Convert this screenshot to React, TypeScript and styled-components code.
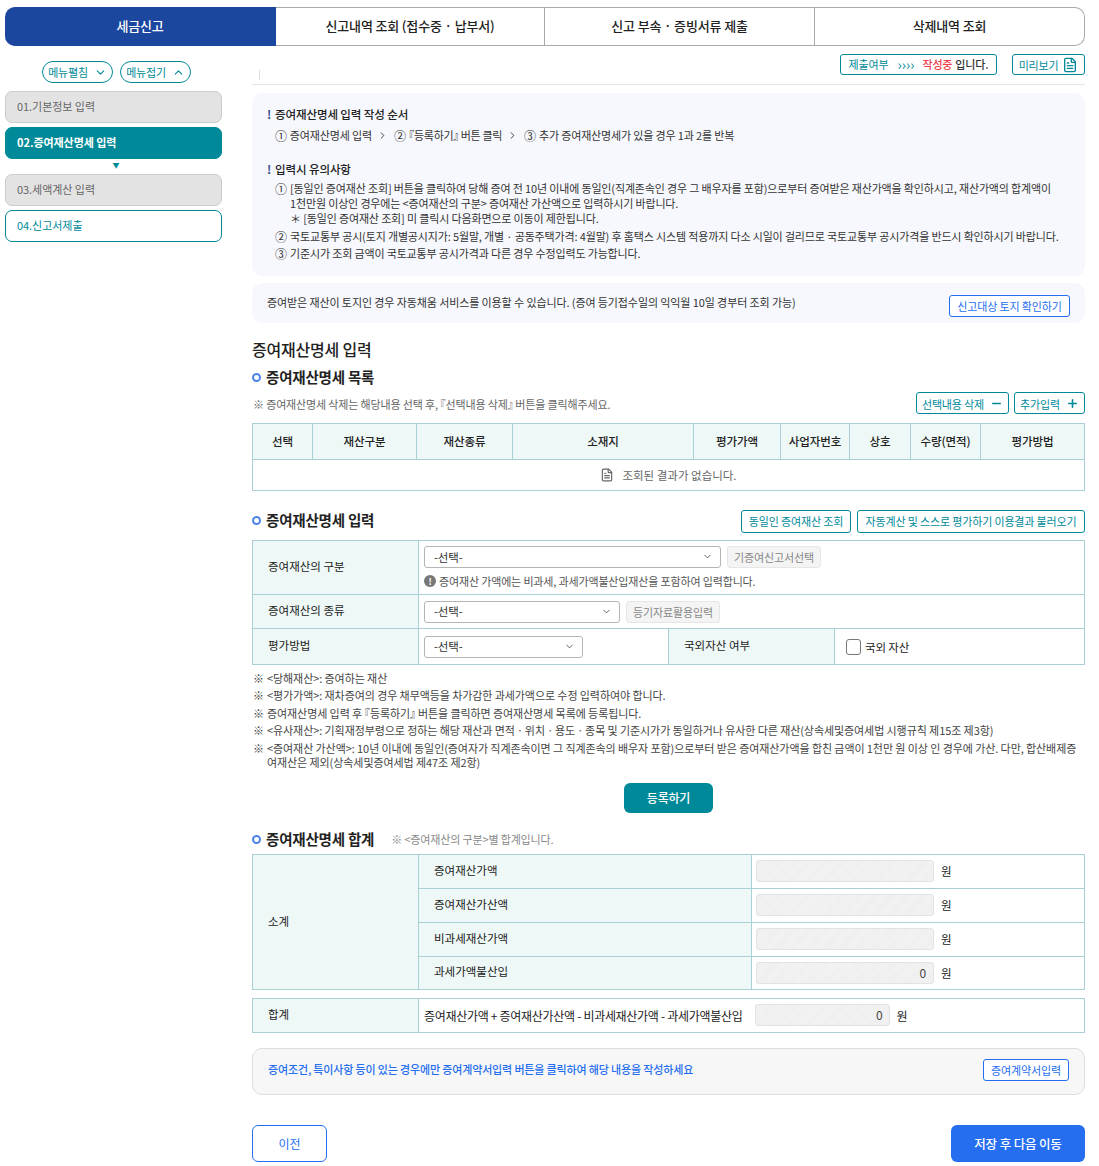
import React from 'react';
import styled, { createGlobalStyle } from 'styled-components';
import { ChevronDown, ChevronRight, ChevronUp, FileText, Minus, Plus } from 'lucide-react';

const TEAL = '#008a99';
const BLUE = '#256ef0';
const LINE = '#a9d0d6';
const HEAD = '#eef8f6';

const listColumns = [
  { label: '선택', width: 60 },
  { label: '재산구분', width: 104 },
  { label: '재산종류', width: 96 },
  { label: '소재지', width: 181 },
  { label: '평가가액', width: 87 },
  { label: '사업자번호', width: 69 },
  { label: '상호', width: 61 },
  { label: '수량(면적)', width: 70 },
  { label: '평가방법', width: 104 },
];

const subtotals = [
  { label: '증여재산가액', value: '' },
  { label: '증여재산가산액', value: '' },
  { label: '비과세재산가액', value: '' },
  { label: '과세가액불산입', value: '0' },
];

const App = () => {
  const notes: React.ReactNode[] = [
    '<당해재산>: 증여하는 재산',
    '<평가가액>: 재차증여의 경우 채무액등을 차가감한 과세가액으로 수정 입력하여야 합니다.',
    <>
      증여재산명세 입력 후 <Bracket>『</Bracket>등록하기<Bracket>』</Bracket> 버튼을 클릭하면 증여재산명세 목록에 등록됩니다.
    </>,
    '<유사재산>: 기획재정부령으로 정하는 해당 재산과 면적ㆍ위치ㆍ용도ㆍ종목 및 기준시가가 동일하거나 유사한 다른 재산(상속세및증여세법 시행규칙 제15조 제3항)',
    '<증여재산 가산액>: 10년 이내에 동일인(증여자가 직계존속이면 그 직계존속의 배우자 포함)으로부터 받은 증여재산가액을 합친 금액이 1천만 원 이상 인 경우에 가산. 다만, 합산배제증여재산은 제외(상속세및증여세법 제47조 제2항)',
  ];

  return (
    <>
      <GlobalStyle />
      <Page>
        <Tabs>
          <Tab $active>세금신고</Tab>
          <Tab>신고내역 조회 (접수중 · 납부서)</Tab>
          <Tab>신고 부속 · 증빙서류 제출</Tab>
          <Tab>삭제내역 조회</Tab>
        </Tabs>

        <Body>
          <Sidebar>
            <MenuToggles>
              <MenuToggle>
                메뉴펼침 <ChevronDown size={13} />
              </MenuToggle>
              <MenuToggle>
                메뉴접기 <ChevronUp size={13} />
              </MenuToggle>
            </MenuToggles>
            <Step $kind="done">01.기본정보 입력</Step>
            <Step $kind="active">02.증여재산명세 입력</Step>
            <StepArrow>▼</StepArrow>
            <Step $kind="done">03.세액계산 입력</Step>
            <Step $kind="next">04.신고서제출</Step>
          </Sidebar>

          <Main>
            <TopBar>
              <TopTick />
              <StatusBox>
                제출여부 <Arrows>››››</Arrows> <Red>작성중</Red> <Strong>입니다.</Strong>
              </StatusBox>
              <PreviewButton>
                미리보기 <FileText size={16} />
              </PreviewButton>
            </TopBar>

            <InfoBox>
              <InfoTitle>증여재산명세 입력 작성 순서</InfoTitle>
              <StepLine>
                <Num>①</Num> 증여재산명세 입력 <ChevronRight size={11} />
                <Num>②</Num>
                <TightText>
                  <Bracket>『</Bracket>등록하기<Bracket>』</Bracket> 버튼 클릭
                </TightText>
                <ChevronRight size={11} />
                <Num>③</Num> 추가 증여재산명세가 있을 경우 1과 2를 반복
              </StepLine>
              <InfoTitle $second>입력시 유의사항</InfoTitle>
              <InfoItem $first>
                <ItemNum>①</ItemNum>
                <div>
                  [동일인 증여재산 조회] 버튼을 클릭하여 당해 증여 전 10년 이내에 동일인(직계존속인 경우 그 배우자를 포함)으로부터 증여받은 재산가액을 확인하시고, 재산가액의 합계액이
                  <br />
                  1천만원 이상인 경우에는 &lt;증여재산의 구분&gt; 증여재산 가산액으로 입력하시기 바랍니다.
                  <br />＊ [동일인 증여재산 조회] 미 클릭시 다음화면으로 이동이 제한됩니다.
                </div>
              </InfoItem>
              <InfoItem>
                <ItemNum>②</ItemNum>
                <div>국토교통부 공시(토지 개별공시지가: 5월말, 개별 · 공동주택가격: 4월말) 후 홈택스 시스템 적용까지 다소 시일이 걸리므로 국토교통부 공시가격을 반드시 확인하시기 바랍니다.</div>
              </InfoItem>
              <InfoItem>
                <ItemNum>③</ItemNum>
                <div>기준시가 조회 금액이 국토교통부 공시가격과 다른 경우 수정입력도 가능합니다.</div>
              </InfoItem>
            </InfoBox>

            <LandBox>
              <span>증여받은 재산이 토지인 경우 자동채움 서비스를 이용할 수 있습니다. (증여 등기접수일의 익익월 10일 경부터 조회 가능)</span>
              <BlueOutlineButton>신고대상 토지 확인하기</BlueOutlineButton>
            </LandBox>

            <PageTitle>증여재산명세 입력</PageTitle>
            <SectionTitle>증여재산명세 목록</SectionTitle>

            <ListTools>
              <GrayNote>
                ※ 증여재산명세 삭제는 해당내용 선택 후, <Bracket>『</Bracket>선택내용 삭제<Bracket>』</Bracket> 버튼을 클릭해주세요.
              </GrayNote>
              <ToolButton $width={93}>
                선택내용 삭제 <Minus size={13} strokeWidth={2.5} />
              </ToolButton>
              <ToolButton $width={71}>
                추가입력 <Plus size={13} strokeWidth={3} />
              </ToolButton>
            </ListTools>

            <ListTable>
              <ListHead>
                {listColumns.map((col) => (
                  <ListHeadCell key={col.label} style={{ width: col.width }}>
                    {col.label}
                  </ListHeadCell>
                ))}
              </ListHead>
              <EmptyRow>
                <FileText size={14} /> 조회된 결과가 없습니다.
              </EmptyRow>
            </ListTable>

            <SectionRow>
              <SectionTitle>증여재산명세 입력</SectionTitle>
              <SectionButtons>
                <ToolButton $width={110} $tall>
                  동일인 증여재산 조회
                </ToolButton>
                <ToolButton $width={228} $tall>
                  자동계산 및 스스로 평가하기 이용결과 불러오기
                </ToolButton>
              </SectionButtons>
            </SectionRow>

            <FormTable>
              <FormRow $height={54}>
                <LabelCell>증여재산의 구분</LabelCell>
                <ValueCell $column>
                  <InlineRow>
                    <SelectBox $width={297}>
                      -선택- <ChevronDown size={11} />
                    </SelectBox>
                    <DisabledButton>기증여신고서선택</DisabledButton>
                  </InlineRow>
                  <Warning>
                    <WarnDot>!</WarnDot> 증여재산 가액에는 비과세, 과세가액불산입재산을 포함하여 입력합니다.
                  </Warning>
                </ValueCell>
              </FormRow>
              <FormRow $height={34}>
                <LabelCell>증여재산의 종류</LabelCell>
                <ValueCell>
                  <InlineRow>
                    <SelectBox $width={196}>
                      -선택- <ChevronDown size={11} />
                    </SelectBox>
                    <DisabledButton>등기자료활용입력</DisabledButton>
                  </InlineRow>
                </ValueCell>
              </FormRow>
              <FormRow $height={36} $split>
                <LabelCell>평가방법</LabelCell>
                <ValueCell>
                  <SelectBox $width={159}>
                    -선택- <ChevronDown size={11} />
                  </SelectBox>
                </ValueCell>
                <LabelCell>국외자산 여부</LabelCell>
                <ValueCell $checkbox>
                  <CheckBox />
                  국외 자산
                </ValueCell>
              </FormRow>
            </FormTable>

            <NoteList>
              {notes.map((note, index) => (
                <NoteItem key={index}>
                  <span>※</span>
                  <span>{note}</span>
                </NoteItem>
              ))}
            </NoteList>

            <RegisterButton>등록하기</RegisterButton>

            <SummaryHead>
              <SectionTitle>증여재산명세 합계</SectionTitle>
              <GrayNote>※ &lt;증여재산의 구분&gt;별 합계입니다.</GrayNote>
            </SummaryHead>

            <SummaryTable>
              <SummaryLabel>소계</SummaryLabel>
              <SummaryRows>
                {subtotals.map((row) => (
                  <SummaryRow key={row.label}>
                    <SummaryName>{row.label}</SummaryName>
                    <SummaryValue>
                      <AmountInput $width={178}>{row.value}</AmountInput>
                      <span>원</span>
                    </SummaryValue>
                  </SummaryRow>
                ))}
              </SummaryRows>
            </SummaryTable>

            <TotalTable>
              <SummaryLabel>합계</SummaryLabel>
              <TotalValue>
                <span>증여재산가액 + 증여재산가산액 - 비과세재산가액 - 과세가액불산입</span>
                <AmountInput $width={135}>0</AmountInput>
                <span>원</span>
              </TotalValue>
            </TotalTable>

            <ContractBox>
              <ContractText>증여조건, 특이사항 등이 있는 경우에만 증여계약서입력 버튼을 클릭하여 해당 내용을 작성하세요</ContractText>
              <BlueOutlineButton $small>증여계약서입력</BlueOutlineButton>
            </ContractBox>

            <Footer>
              <PrevButton>이전</PrevButton>
              <NextButton>저장 후 다음 이동</NextButton>
            </Footer>
          </Main>
        </Body>
      </Page>
    </>
  );
};

export default App;

const GlobalStyle = createGlobalStyle`
  * {
    margin: 0;
    padding: 0;
    box-sizing: border-box;
  }
  body {
    font-family: 'Noto Sans CJK KR', 'Noto Sans', sans-serif;
    background-color: #fff;
    color: #333;
    font-size: 11px;
    letter-spacing: -0.15px;
  }
`;

const Page = styled.div`
  width: 1099px;
  height: 1166px;
  padding: 7px 14px 0 5px;
  overflow: hidden;
`;

const Tabs = styled.div`
  display: grid;
  grid-template-columns: 271px 269px 270px 270px;
  height: 39px;
`;

const Tab = styled.div<{ $active?: boolean }>`
  display: flex;
  align-items: center;
  justify-content: center;
  padding-bottom: 2px;
  font-size: 13px;
  font-weight: 500;
  color: ${(p) => (p.$active ? '#fff' : '#222')};
  background: ${(p) => (p.$active ? '#1c479f' : '#fff')};
  border: 1px solid ${(p) => (p.$active ? '#1c479f' : '#aaa')};
  border-left: none;
  border-radius: ${(p) => (p.$active ? '10px 0 0 10px' : '0')};

  &:last-child {
    border-radius: 0 10px 10px 0;
  }
`;

const Body = styled.div`
  display: flex;
  gap: 30px;
`;

const Sidebar = styled.aside`
  width: 217px;
  flex-shrink: 0;
  display: flex;
  flex-direction: column;
`;

const MenuToggles = styled.div`
  display: flex;
  justify-content: center;
  gap: 7px;
  margin: 15px 0 8px;
  padding-left: 6px;
`;

const MenuToggle = styled.button`
  display: flex;
  align-items: center;
  justify-content: center;
  gap: 6px;
  width: 71px;
  height: 22px;
  background: #fff;
  border: 1px solid ${TEAL};
  border-radius: 11px;
  color: ${TEAL};
  font: inherit;
  font-size: 11px;
  letter-spacing: -0.2px;
`;

const Step = styled.div<{ $kind: 'done' | 'active' | 'next' }>`
  display: flex;
  align-items: center;
  height: 32px;
  padding: 0 0 2px 11px;
  border-radius: 7px;
  font-size: 11px;
  letter-spacing: -0.05px;
  margin-bottom: ${(p) => (p.$kind === 'done' ? '4px' : '0')};
  background: ${(p) => (p.$kind === 'done' ? '#e3e3e3' : p.$kind === 'active' ? TEAL : '#fff')};
  border: 1px solid ${(p) => (p.$kind === 'done' ? '#ccc' : TEAL)};
  color: ${(p) => (p.$kind === 'done' ? '#666' : p.$kind === 'active' ? '#fff' : TEAL)};
  font-weight: ${(p) => (p.$kind === 'active' ? 700 : 400)};
`;

const StepArrow = styled.div`
  height: 15px;
  padding-left: 5px;
  line-height: 13px;
  text-align: center;
  font-size: 7px;
  color: ${TEAL};
`;

const Main = styled.main`
  width: 833px;
  display: flex;
  flex-direction: column;
`;

const TopBar = styled.div`
  display: flex;
  justify-content: flex-end;
  gap: 15px;
  position: relative;
  height: 39px;
  padding-top: 8px;
  border-bottom: 1px solid #e5e5e5;
`;

const TopTick = styled.span`
  position: absolute;
  left: 7px;
  top: 24px;
  width: 1px;
  height: 10px;
  background: #ddd;
`;

const StatusBox = styled.div`
  display: flex;
  align-items: center;
  justify-content: center;
  gap: 3px;
  width: 157px;
  height: 21px;
  padding-bottom: 1px;
  border: 1px solid ${TEAL};
  border-radius: 3px;
  color: ${TEAL};
  font-size: 11px;
`;

const Arrows = styled.span`
  margin: 0 5px 0 6px;
  font-size: 14px;
  letter-spacing: 0;
`;

const Red = styled.span`
  color: #f0404a;
  font-weight: 500;
`;

const Strong = styled.span`
  color: #333;
  font-weight: 500;
`;

const PreviewButton = styled.button`
  display: flex;
  align-items: center;
  justify-content: center;
  gap: 4px;
  width: 73px;
  height: 21px;
  background: #fff;
  border: 1px solid ${TEAL};
  border-radius: 3px;
  color: ${TEAL};
  font: inherit;
  font-size: 11px;
  letter-spacing: -0.2px;
`;

const InfoBox = styled.section`
  height: 183px;
  margin-top: 8px;
  padding: 13px 15px 0;
  background: #f7f8fd;
  border-radius: 10px;
  color: #333;
  line-height: 15px;
`;

const InfoTitle = styled.h4<{ $second?: boolean }>`
  position: relative;
  margin-top: ${(p) => (p.$second ? '18px' : '0')};
  padding-left: 8px;
  height: 16px;
  font-size: 11.5px;
  font-weight: 500;
  line-height: 16px;
  letter-spacing: -0.1px;
  color: #222;

  &::before {
    content: '!';
    position: absolute;
    left: 0;
    top: 0;
    font-weight: 700;
    color: #33508f;
  }
`;

const StepLine = styled.div`
  display: flex;
  align-items: center;
  height: 15px;
  margin-top: 6px;
  padding-left: 8px;
  gap: 3px;

  svg {
    margin: 0 3px 0 2px;
  }
`;

const Num = styled.span`
  font-size: 12px;
`;

const TightText = styled.span`
  letter-spacing: -0.3px;
`;

// half-width form of the CJK brackets, the reference font draws them narrow
const Bracket = styled.span`
  font-feature-settings: 'halt';
`;

const InfoItem = styled.div<{ $first?: boolean }>`
  display: flex;
  margin-top: ${(p) => (p.$first ? '4px' : '2.5px')};
  padding-left: 8px;
`;

const ItemNum = styled.span`
  width: 15px;
  flex-shrink: 0;
  font-size: 12px;
`;

const LandBox = styled.section`
  display: flex;
  align-items: center;
  justify-content: space-between;
  height: 40px;
  margin-top: 7px;
  padding: 0 15px 2px;
  background: #f7f8fd;
  border-radius: 10px;
  letter-spacing: -0.1px;
`;

const BlueOutlineButton = styled.button<{ $small?: boolean }>`
  width: ${(p) => (p.$small ? '86px' : '121px')};
  height: 22px;
  margin-top: ${(p) => (p.$small ? '0' : '8px')};
  background: #fff;
  border: 1px solid ${BLUE};
  border-radius: 3px;
  color: ${BLUE};
  font: inherit;
  font-size: 11px;
  letter-spacing: -0.15px;
`;

const PageTitle = styled.h2`
  height: 24px;
  margin: 14px 0 6px;
  font-size: 16px;
  font-weight: 500;
  line-height: 24px;
  letter-spacing: -0.2px;
  color: #222;
`;

const SectionTitle = styled.h3`
  position: relative;
  flex-shrink: 0;
  height: 20px;
  padding-left: 14px;
  font-size: 14.5px;
  font-weight: 700;
  line-height: 20px;
  letter-spacing: -0.2px;
  color: #222;

  &::before {
    content: '';
    position: absolute;
    left: 0;
    top: 6px;
    box-sizing: border-box;
    width: 9px;
    height: 9px;
    border: 2px solid #4d82ea;
    border-radius: 50%;
  }
`;

const ListTools = styled.div`
  display: flex;
  align-items: center;
  gap: 5px;
  height: 22px;
  margin: 5px 0 9px;
`;

const GrayNote = styled.span`
  flex: 1;
  padding: 1px 0 0 1px;
  color: #666;
`;

const ToolButton = styled.button<{ $tall?: boolean; $width: number }>`
  display: flex;
  align-items: center;
  justify-content: center;
  gap: 6px;
  width: ${(p) => p.$width}px;
  height: ${(p) => (p.$tall ? '23px' : '22px')};
  padding: ${(p) => (p.$tall ? '0 0 1px' : '1px 0 0')};
  background: #fff;
  border: 1px solid ${TEAL};
  border-radius: 3px;
  color: ${TEAL};
  font: inherit;
  font-size: 11px;
  letter-spacing: -0.15px;
`;

const ListTable = styled.div`
  border: 1px solid ${LINE};
  border-right: none;
  border-bottom: none;
`;

const ListHead = styled.div`
  display: flex;
  height: 36px;
  background: ${HEAD};
`;

const ListHeadCell = styled.div`
  display: flex;
  flex-shrink: 0;
  align-items: center;
  justify-content: center;
  padding-bottom: 2px;
  border-right: 1px solid ${LINE};
  border-bottom: 1px solid ${LINE};
  font-size: 11.5px;
  font-weight: 500;
  letter-spacing: -0.1px;
  color: #222;
`;

const EmptyRow = styled.div`
  display: flex;
  align-items: center;
  justify-content: center;
  gap: 8px;
  height: 31px;
  border-right: 1px solid ${LINE};
  border-bottom: 1px solid ${LINE};
  color: #666;
  font-size: 11.5px;
  letter-spacing: 0;
`;

const SectionRow = styled.div`
  display: flex;
  align-items: flex-start;
  justify-content: space-between;
  height: 23px;
  margin: 19px 0 7px;
`;

const SectionButtons = styled.div`
  display: flex;
  gap: 6px;
`;

const FormTable = styled.div`
  border: 1px solid ${LINE};
  border-bottom: none;
`;

const FormRow = styled.div<{ $height: number; $split?: boolean }>`
  display: grid;
  grid-template-columns: ${(p) => (p.$split ? '166px 249px 167px 1fr' : '166px 1fr')};
  height: ${(p) => p.$height}px;
  border-bottom: 1px solid ${LINE};
`;

const LabelCell = styled.div`
  display: flex;
  align-items: center;
  padding: 0 0 4px 15px;
  background: ${HEAD};
  border-right: 1px solid ${LINE};
  font-size: 11.5px;
  letter-spacing: 0;
  color: #222;

  &:nth-child(3) {
    border-left: 1px solid ${LINE};
  }
`;

const ValueCell = styled.div<{ $column?: boolean; $checkbox?: boolean }>`
  display: flex;
  flex-direction: ${(p) => (p.$column ? 'column' : 'row')};
  align-items: ${(p) => (p.$column ? 'flex-start' : 'center')};
  gap: ${(p) => (p.$checkbox ? '4px' : '0')};
  padding: ${(p) => (p.$column ? '5px 5px 0' : p.$checkbox ? '0 11px' : '0 5px')};
  font-size: 11.5px;
  color: #222;
`;

const InlineRow = styled.div`
  display: flex;
  gap: 6px;
`;

const SelectBox = styled.div<{ $width: number }>`
  display: flex;
  align-items: center;
  justify-content: space-between;
  width: ${(p) => p.$width}px;
  height: 22px;
  padding: 0 7px 1px 9px;
  background: #fff;
  border: 1px solid #b5b5b5;
  border-radius: 3px;
  font-size: 11.5px;
  color: #333;

  svg {
    color: #555;
  }
`;

const DisabledButton = styled.button`
  width: 94px;
  height: 22px;
  background: #f4f4f4;
  border: 1px solid #e6e6e6;
  border-radius: 3px;
  color: #888;
  font: inherit;
  font-size: 11px;
  letter-spacing: -0.15px;
`;

const Warning = styled.div`
  display: flex;
  align-items: center;
  gap: 3px;
  height: 16px;
  margin-top: 5px;
  font-size: 11px;
  color: #555;
`;

const WarnDot = styled.span`
  display: flex;
  align-items: center;
  justify-content: center;
  width: 12px;
  height: 12px;
  border-radius: 50%;
  background: #777;
  color: #fff;
  font-size: 9px;
  font-weight: 700;
`;

const CheckBox = styled.span`
  width: 15px;
  height: 16px;
  background: #fff;
  border: 1px solid #777;
  border-radius: 3px;
`;

const NoteList = styled.ul`
  display: flex;
  flex-direction: column;
  gap: 3.4px;
  margin-top: 6px;
  list-style: none;
  line-height: 14px;
  letter-spacing: -0.08px;
  color: #444;
`;

const NoteItem = styled.li`
  display: grid;
  grid-template-columns: 14px 1fr;
  padding: 0 4px 0 1px;
`;

const RegisterButton = styled.button`
  align-self: center;
  width: 89px;
  height: 30px;
  margin-top: 14px;
  background: ${TEAL};
  border: none;
  border-radius: 6px;
  color: #fff;
  font: inherit;
  font-size: 12px;
  font-weight: 500;
  letter-spacing: -0.2px;
`;

const SummaryHead = styled.div`
  display: flex;
  align-items: center;
  gap: 16px;
  height: 20px;
  margin: 16px 0 5px;

  span {
    color: #888;
  }
`;

const SummaryTable = styled.div`
  display: grid;
  grid-template-columns: 166px 1fr;
  height: 136px;
  border: 1px solid ${LINE};
`;

const SummaryLabel = styled.div`
  display: flex;
  align-items: center;
  padding: 0 0 2px 15px;
  background: ${HEAD};
  border-right: 1px solid ${LINE};
  font-size: 11.5px;
  letter-spacing: 0;
  color: #222;
`;

const SummaryRows = styled.div`
  display: grid;
  grid-template-rows: 34px 34px 34px 1fr;
`;

const SummaryRow = styled.div`
  display: grid;
  grid-template-columns: 333px 1fr;
  border-bottom: 1px solid ${LINE};

  &:last-child {
    border-bottom: none;
  }
`;

const SummaryName = styled.div`
  display: flex;
  align-items: center;
  padding: 0 0 3px 15px;
  background: ${HEAD};
  border-right: 1px solid ${LINE};
  font-size: 11.5px;
  letter-spacing: 0;
  color: #222;
`;

const SummaryValue = styled.div`
  display: flex;
  align-items: center;
  gap: 7px;
  padding-left: 4px;
  font-size: 11.5px;
  color: #222;
`;

const AmountInput = styled.div<{ $width: number }>`
  width: ${(p) => p.$width}px;
  height: 22px;
  padding-right: 7px;
  background: repeating-linear-gradient(135deg, #eee 0 1px, #f3f3f3 1px 2px);
  border: 1px solid #e2e2e8;
  border-radius: 3px;
  text-align: right;
  font-size: 12px;
  line-height: 19px;
  color: #444;
`;

const TotalTable = styled.div`
  display: grid;
  grid-template-columns: 166px 1fr;
  height: 35px;
  margin-top: 8px;
  border: 1px solid ${LINE};
`;

const TotalValue = styled.div`
  display: flex;
  align-items: center;
  gap: 6px;
  padding-left: 5px;
  font-size: 12px;
  letter-spacing: -0.3px;
  color: #222;

  div {
    margin-left: 7px;
  }
`;

const ContractBox = styled.section`
  display: flex;
  align-items: center;
  justify-content: space-between;
  height: 47px;
  margin-top: 15px;
  padding: 0 15px 2px;
  background: #f7f7f7;
  border: 1px solid #ddd;
  border-radius: 10px;
`;

const ContractText = styled.span`
  margin-bottom: 2px;
  font-weight: 500;
  color: ${BLUE};
`;

const Footer = styled.div`
  display: flex;
  justify-content: space-between;
  margin-top: 30px;
`;

const PrevButton = styled.button`
  width: 75px;
  height: 37px;
  background: #fff;
  border: 1px solid ${BLUE};
  border-radius: 6px;
  color: ${BLUE};
  font: inherit;
  font-size: 12px;
  letter-spacing: -0.15px;
`;

const NextButton = styled.button`
  width: 134px;
  height: 37px;
  background: ${BLUE};
  border: none;
  border-radius: 6px;
  color: #fff;
  font: inherit;
  font-size: 12.5px;
  font-weight: 500;
  letter-spacing: -0.15px;
`;
